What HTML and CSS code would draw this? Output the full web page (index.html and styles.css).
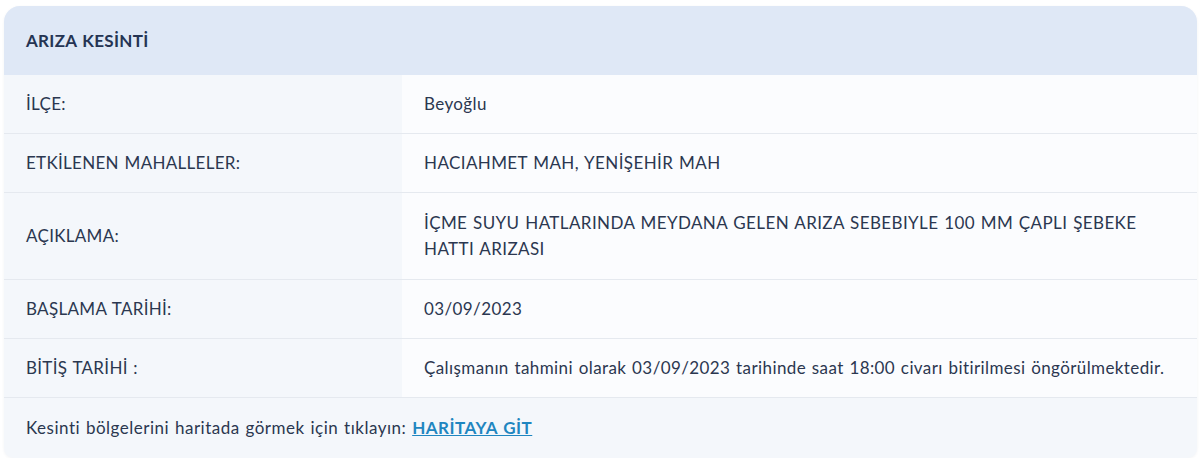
FILE: index.html
```html
<!DOCTYPE html>
<html lang="tr">
<head>
    <meta charset="UTF-8">
    <meta name="viewport" content="width=device-width, initial-scale=1.0">
    <title>Arıza Kesinti</title>
    <link rel="stylesheet" href="styles.css">
</head>
<body>
    <div class="card">
        <div class="card-header">ARIZA KESİNTİ</div>
        <table class="info-table">
            <tr>
                <td class="label">İLÇE:</td>
                <td class="value">Beyoğlu</td>
            </tr>
            <tr>
                <td class="label">ETKİLENEN MAHALLELER:</td>
                <td class="value">HACIAHMET MAH, YENİŞEHİR MAH</td>
            </tr>
            <tr class="tall">
                <td class="label">AÇIKLAMA:</td>
                <td class="value">İÇME SUYU HATLARINDA MEYDANA GELEN ARIZA SEBEBIYLE 100 MM ÇAPLI ŞEBEKE HATTI ARIZASI</td>
            </tr>
            <tr>
                <td class="label">BAŞLAMA TARİHİ:</td>
                <td class="value">03/09/2023</td>
            </tr>
            <tr>
                <td class="label">BİTİŞ TARİHİ :</td>
                <td class="value">Çalışmanın tahmini olarak 03/09/2023 tarihinde saat 18:00 civarı bitirilmesi öngörülmektedir.</td>
            </tr>
        </table>
        <div class="card-footer">
            Kesinti bölgelerini haritada görmek için tıklayın: <a href="#">HARİTAYA GİT</a>
        </div>
    </div>
</body>
</html>
```

FILE: styles.css
```css
body {
    font-family: Lato, "Noto Sans", sans-serif;
    margin: 0;
    padding: 6px 3px 0 4px;
    background-color: #ffffff;
    color: #2b3750;
    letter-spacing: 0.3px;
    word-spacing: 1px;
}
.card {
    background-color: #f4f7fb;
    border-radius: 16px 16px 10px 10px;
    overflow: hidden;
    box-shadow: 0 1px 3px rgba(40, 52, 77, 0.06);
}
.card-header {
    background-color: #dfe8f6;
    height: 69px;
    line-height: 69px;
    padding-left: 22px;
    font-size: 17px;
    font-weight: 700;
    color: #253453;
}
.info-table {
    width: 100%;
    border-collapse: collapse;
}
.info-table td {
    font-size: 17px;
    line-height: 26px;
    padding: 16px 22px;
    border-bottom: 1px solid #e5e9ef;
    vertical-align: middle;
}
.info-table .tall td {
    padding-top: 17px;
    padding-bottom: 17px;
}
.info-table .label {
    width: 354px;
    background-color: #f4f7fb;
}
.info-table .value {
    background-color: #fbfcfe;
    padding-right: 28px;
    letter-spacing: 0.4px;
}
.card-footer {
    padding: 17px 22px;
    font-size: 17px;
    line-height: 26px;
    letter-spacing: 0.5px;
}
.card-footer a {
    color: #1f86c0;
    font-weight: 700;
}
```
